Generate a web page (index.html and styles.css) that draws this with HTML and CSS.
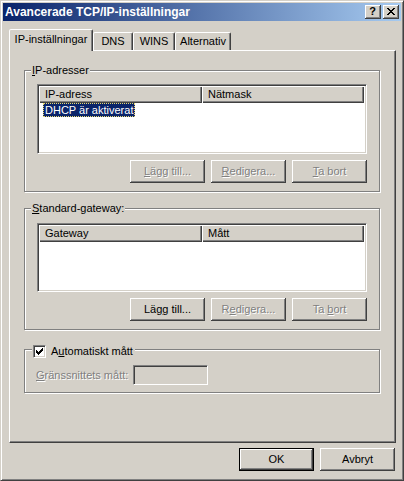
FILE: index.html
```html
<!DOCTYPE html>
<html lang="sv">
<head>
<meta charset="utf-8">
<title>Avancerade TCP/IP-inställningar</title>
<link rel="stylesheet" href="styles.css">
</head>
<body>
<div class="window">
  <div class="titlebar">
    <span class="title">Avancerade TCP/IP-inställningar</span>
    <div class="tbtns">
      <span class="tbtn help">?</span>
      <span class="tbtn close"><svg width="8" height="7" viewBox="0 0 8 7" shape-rendering="crispEdges"><path d="M0 0h2v1H0z M6 0h2v1H6z M1 1h2v1H1z M5 1h2v1H5z M2 2h4v1H2z M3 3h2v1H3z M2 4h4v1H2z M1 5h2v1H1z M5 5h2v1H5z M0 6h2v1H0z M6 6h2v1H6z" fill="#000"/></svg></span>
    </div>
  </div>
  <div class="content">
    <div class="tabs">
      <div class="tab active w1">IP-inställningar</div>
      <div class="tab w2">DNS</div>
      <div class="tab w3">WINS</div>
      <div class="tab w4">Alternativ</div>
    </div>
    <div class="panel">
      <div class="group g1">
        <div class="legend"><u>I</u>P-adresser</div>
        <div class="list l1">
          <div class="lhead"><div class="hc hc1">IP-adress</div><div class="hc hc2">Nätmask</div></div>
          <div class="row"><span class="sel">DHCP är aktiverat</span></div>
        </div>
        <div class="btnrow">
          <div class="btn disabled"><span><u>L</u>ägg till...</span></div>
          <div class="btn disabled"><span><u>R</u>edigera...</span></div>
          <div class="btn disabled"><span><u>T</u>a bort</span></div>
        </div>
      </div>
      <div class="group g2">
        <div class="legend"><u>S</u>tandard-gateway:</div>
        <div class="list l2">
          <div class="lhead"><div class="hc hc1">Gateway</div><div class="hc hc2">Mått</div></div>
        </div>
        <div class="btnrow">
          <div class="btn"><span>Lä<u>g</u>g till...</span></div>
          <div class="btn disabled"><span>R<u>e</u>digera...</span></div>
          <div class="btn disabled"><span>Ta <u>b</u>ort</span></div>
        </div>
      </div>
      <div class="group g3">
        <div class="legend legend-check">
          <span class="checkbox"><svg width="7" height="7" viewBox="0 0 7 7" shape-rendering="crispEdges"><polygon points="6,0 7,0 7,3 6,3 6,4 5,4 5,5 4,5 4,6 3,6 3,7 2,7 2,6 1,6 1,5 0,5 0,2 1,2 1,3 2,3 2,4 3,4 3,3 4,3 4,2 5,2 5,1 6,1" fill="#000"/></svg></span>
          <span>A<u>u</u>tomatiskt mått</span>
        </div>
        <div class="metric">
          <span class="mlabel"><u>G</u>ränssnittets mått:</span>
          <span class="tb"></span>
        </div>
      </div>
    </div>
    <div class="footer">
      <div class="btn default"><span>OK</span></div>
      <div class="btn"><span>Avbryt</span></div>
    </div>
  </div>
</div>
</body>
</html>
```
FILE: styles.css
```css
html, body {
  margin: 0;
  padding: 0;
  background: #d4d0c8;
}
body {
  font-family: "Liberation Sans", Arial, sans-serif;
  font-size: 11px;
  line-height: 13px;
  color: #000;
}
u { text-decoration: underline; text-underline-offset: 1px; }

.window {
  width: 404px;
  height: 481px;
  box-sizing: border-box;
  border: 1px solid;
  border-color: #d4d0c8 #404040 #404040 #d4d0c8;
  box-shadow: inset 1px 1px 0 #fff, inset -1px -1px 0 #808080;
  padding: 2px;
  display: flex;
  flex-direction: column;
}

.titlebar {
  height: 18px;
  flex: none;
  display: flex;
  align-items: center;
  background: linear-gradient(to right, #0a246a, #a6caf0);
}
.title {
  flex: 1;
  padding-left: 2px;
  color: #fff;
  font-weight: bold;
  font-size: 12px;
  white-space: nowrap;
}
.tbtns {
  display: flex;
  gap: 2px;
  margin-right: 2px;
}
.tbtn {
  width: 16px;
  height: 14px;
  box-sizing: border-box;
  background: #d4d0c8;
  box-shadow: inset -1px -1px 0 #404040, inset 1px 1px 0 #fff, inset -2px -2px 0 #808080;
  display: flex;
  justify-content: center;
}
.help {
  font-weight: bold;
  font-size: 11px;
  line-height: 13px;
  padding-right: 1px;
}
.close {
  align-items: flex-start;
  padding-top: 3px;
}
.close svg { display: block; }

.content {
  flex: 1;
  padding: 8px 5px 0 6px;
  display: flex;
  flex-direction: column;
}

.tabs {
  display: flex;
  align-items: flex-start;
  height: 21px;
  flex: none;
}
.tab {
  box-sizing: border-box;
  height: 18px;
  margin-top: 3px;
  border: 1px solid;
  border-bottom: 0;
  border-color: #fff #404040 transparent #fff;
  box-shadow: inset -1px 0 0 #808080;
  border-radius: 2px 2px 0 0;
  text-align: center;
  padding-top: 2px;
  background: #d4d0c8;
  white-space: nowrap;
}
.tab.active {
  height: 22px;
  margin-top: 0;
  padding-top: 3px;
  position: relative;
  z-index: 1;
}
.w1 { width: 84px; }
.w2 { width: 40px; }
.w3 { width: 42px; }
.w4 { width: 56px; }

.panel {
  height: 393px;
  flex: none;
  box-sizing: border-box;
  border: 1px solid;
  border-color: #fff #404040 #404040 #fff;
  box-shadow: inset -1px -1px 0 #808080;
  padding: 19px 15px 0 14px;
  display: flex;
  flex-direction: column;
}

.group {
  border: 1px solid #808080;
  box-shadow: 1px 1px 0 #fff, inset 1px 1px 0 #fff;
  padding: 0 12px 8px;
  display: flex;
  flex-direction: column;
}
.g2 { margin-top: 16px; }
.g3 { margin-top: 19px; padding-bottom: 7px; }

.legend {
  align-self: flex-start;
  height: 13px;
  margin: -7px 0 0 -6px;
  padding: 0 1px;
  background: #d4d0c8;
  white-space: nowrap;
}
.legend-check {
  display: flex;
  align-items: center;
  gap: 5px;
  margin: -5px 0 0 -5px;
  padding-right: 2px;
}

.checkbox {
  width: 13px;
  height: 13px;
  box-sizing: border-box;
  border: 1px solid;
  border-color: #808080 #fff #fff #808080;
  box-shadow: inset 1px 1px 0 #404040, inset -1px -1px 0 #d4d0c8;
  background: #fff;
  display: flex;
  padding: 2px 0 0 2px;
}
.checkbox svg { display: block; }

.list {
  box-sizing: border-box;
  background: #fff;
  border: 1px solid;
  border-color: #808080 #fff #fff #808080;
  box-shadow: inset 1px 1px 0 #404040, inset -1px -1px 0 #d4d0c8;
  padding: 1px;
}
.l1 { height: 70px; margin-top: 7px; }
.l2 { height: 69px; margin-top: 8px; }

.lhead {
  display: flex;
  height: 17px;
}
.hc {
  box-sizing: border-box;
  background: #d4d0c8;
  box-shadow: inset 1px 1px 0 #fff, inset -1px -1px 0 #404040, inset -2px -2px 0 #808080;
  padding: 2px 0 0 6px;
  white-space: nowrap;
}
.hc1 { width: 163px; }
.hc2 { width: 162px; }

.row { height: 15px; }
.sel {
  display: inline-block;
  margin-left: 4px;
  padding: 0 2px;
  height: 14px;
  line-height: 14px;
  background: #0a246a;
  color: #fff;
  outline: 1px dotted #e8d870;
  outline-offset: -1px;
}

.btnrow {
  display: flex;
  justify-content: flex-end;
  gap: 6px;
  margin-top: 6px;
}
.btn {
  width: 75px;
  height: 23px;
  flex: none;
  box-sizing: border-box;
  background: #d4d0c8;
  box-shadow: inset -1px -1px 0 #404040, inset 1px 1px 0 #fff, inset -2px -2px 0 #808080;
  display: flex;
  align-items: center;
  justify-content: center;
  white-space: nowrap;
}
.btn.disabled {
  color: #808080;
  text-shadow: 1px 1px 0 #fff;
}
.btn.default {
  border: 1px solid #000;
}

.metric {
  display: flex;
  align-items: center;
  margin-top: 7px;
  height: 20px;
}
.mlabel {
  width: 97px;
  flex: none;
  margin-left: -1px;
  color: #808080;
  text-shadow: 1px 1px 0 #fff;
  white-space: nowrap;
}
.tb {
  width: 75px;
  height: 20px;
  box-sizing: border-box;
  border: 1px solid;
  border-color: #808080 #fff #fff #808080;
  box-shadow: inset 1px 1px 0 #404040, inset -1px -1px 0 #d4d0c8;
  background: #d4d0c8;
}

.footer {
  display: flex;
  justify-content: flex-end;
  gap: 6px;
  margin-top: 5px;
  margin-right: 1px;
}
```
